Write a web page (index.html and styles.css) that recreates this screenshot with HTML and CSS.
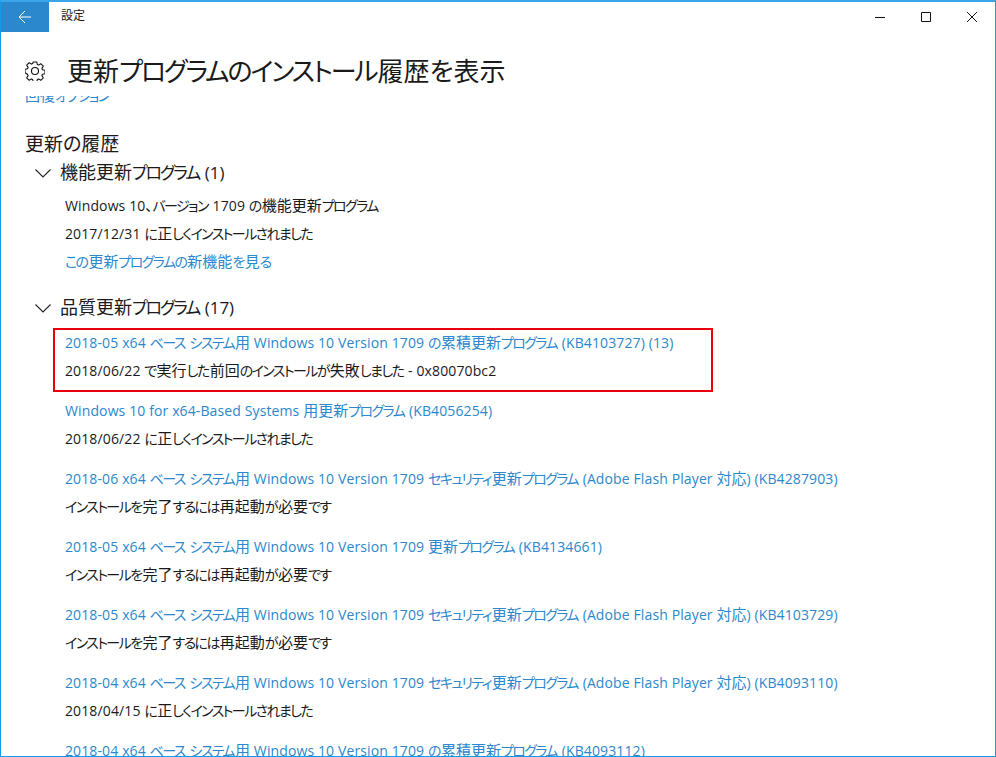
FILE: index.html
```html
<!DOCTYPE html>
<html lang="ja">
<head>
<meta charset="utf-8">
<title>設定</title>
<link rel="stylesheet" href="styles.css">
</head>
<body>
<div class="window">
  <header class="titlebar">
    <div class="back">
      <svg width="16" height="16" viewBox="0 0 16 16"><path d="M14 8H2M8 2 2 8l6 6" fill="none" stroke="#fff" stroke-width="1"/></svg>
    </div>
    <div class="apptitle">設定</div>
    <div class="controls">
      <div class="ctl"><svg width="10" height="10" viewBox="0 0 10 10"><path d="M0 5.5h10" stroke="#111" stroke-width="1"/></svg></div>
      <div class="ctl"><svg width="10" height="10" viewBox="0 0 10 10"><path d="M.5.5h9v9h-9z" fill="none" stroke="#111" stroke-width="1"/></svg></div>
      <div class="ctl"><svg width="10" height="10" viewBox="0 0 10 10"><path d="M0 0l10 10M10 0 0 10" fill="none" stroke="#111" stroke-width="1"/></svg></div>
    </div>
  </header>
  <div class="pagehead">
    <svg class="gear" width="20" height="20" viewBox="0 0 20 20"><path d="M8.2 1h3.6l.5 2.5 1.3.6 2.2-1.4 2.5 2.5-1.4 2.2.6 1.3 2.5.5v3.6l-2.5.5-.6 1.3 1.4 2.2-2.5 2.5-2.2-1.4-1.3.6-.5 2.5H8.2l-.5-2.5-1.3-.6-2.2 1.4-2.5-2.5 1.4-2.2-.6-1.3L0 11.8V8.2l2.5-.5.6-1.3-1.4-2.2 2.5-2.5 2.2 1.4 1.3-.6z" fill="none" stroke="#111" stroke-width="1.1" stroke-linejoin="round"/><circle cx="10" cy="10" r="3.5" fill="none" stroke="#111" stroke-width="1.1"/></svg>
    <h1 class="pagetitle">更新<span class="k">プログラムのインストール</span>履歴を表示</h1>
  </div>
  <main class="scroll">
    <div class="content">
      <a class="link toplink"><span class="h">回復</span><span class="k">オプション</span></a>
      <h2 class="history">更新の履歴</h2>
      <section class="group">
        <h3 class="grouphead"><svg class="chev" width="16" height="9" viewBox="0 0 16 9"><path d="M.5.5 8 8 15.5.5" fill="none" stroke="#222" stroke-width="1.1"/></svg><span><span class="h">機能更新</span><span class="k">プログラム</span> (1)</span></h3>
        <div class="item first">
          <p class="line">Windows 10、<span class="k">バージョン</span> 1709 <span class="k">の</span><span class="h">機能更新</span><span class="k">プログラム</span></p>
          <p class="line">2017/12/31 <span class="k">に</span><span class="h">正</span><span class="k">しくインストールされました</span></p>
          <p class="line link"><span class="k">この</span><span class="h">更新</span><span class="k">プログラムの</span><span class="h">新機能</span><span class="k">を</span><span class="h">見</span><span class="k">る</span></p>
        </div>
      </section>
      <section class="group second">
        <h3 class="grouphead"><svg class="chev" width="16" height="9" viewBox="0 0 16 9"><path d="M.5.5 8 8 15.5.5" fill="none" stroke="#222" stroke-width="1.1"/></svg><span><span class="h">品質更新</span><span class="k">プログラム</span> (17)</span></h3>
        <div class="item flagged">
          <p class="line link">2018-05 x64 <span class="k">ベース</span> <span class="k">システム</span><span class="h">用</span> Windows 10 Version 1709 <span class="k">の</span><span class="h">累積更新</span><span class="k">プログラム</span> (KB4103727) (13)</p>
          <p class="line">2018/06/22 <span class="k">で</span><span class="h">実行</span><span class="k">した</span><span class="h">前回</span><span class="k">のインストールが</span><span class="h">失敗</span><span class="k">しました</span> - 0x80070bc2</p>
        </div>
        <div class="item">
          <p class="line link">Windows 10 for x64-Based Systems <span class="h">用更新</span><span class="k">プログラム</span> (KB4056254)</p>
          <p class="line">2018/06/22 <span class="k">に</span><span class="h">正</span><span class="k">しくインストールされました</span></p>
        </div>
        <div class="item">
          <p class="line link">2018-06 x64 <span class="k">ベース</span> <span class="k">システム</span><span class="h">用</span> Windows 10 Version 1709 <span class="k">セキュリティ</span><span class="h">更新</span><span class="k">プログラム</span> (Adobe Flash Player <span class="h">対応</span>) (KB4287903)</p>
          <p class="line"><span class="k">インストールを</span><span class="h">完了</span><span class="k">するには</span><span class="h">再起動</span><span class="k">が</span><span class="h">必要</span><span class="k">です</span></p>
        </div>
        <div class="item">
          <p class="line link">2018-05 x64 <span class="k">ベース</span> <span class="k">システム</span><span class="h">用</span> Windows 10 Version 1709 <span class="h">更新</span><span class="k">プログラム</span> (KB4134661)</p>
          <p class="line"><span class="k">インストールを</span><span class="h">完了</span><span class="k">するには</span><span class="h">再起動</span><span class="k">が</span><span class="h">必要</span><span class="k">です</span></p>
        </div>
        <div class="item">
          <p class="line link">2018-05 x64 <span class="k">ベース</span> <span class="k">システム</span><span class="h">用</span> Windows 10 Version 1709 <span class="k">セキュリティ</span><span class="h">更新</span><span class="k">プログラム</span> (Adobe Flash Player <span class="h">対応</span>) (KB4103729)</p>
          <p class="line"><span class="k">インストールを</span><span class="h">完了</span><span class="k">するには</span><span class="h">再起動</span><span class="k">が</span><span class="h">必要</span><span class="k">です</span></p>
        </div>
        <div class="item">
          <p class="line link">2018-04 x64 <span class="k">ベース</span> <span class="k">システム</span><span class="h">用</span> Windows 10 Version 1709 <span class="k">セキュリティ</span><span class="h">更新</span><span class="k">プログラム</span> (Adobe Flash Player <span class="h">対応</span>) (KB4093110)</p>
          <p class="line">2018/04/15 <span class="k">に</span><span class="h">正</span><span class="k">しくインストールされました</span></p>
        </div>
        <div class="item">
          <p class="line link">2018-04 x64 <span class="k">ベース</span> <span class="k">システム</span><span class="h">用</span> Windows 10 Version 1709 <span class="k">の</span><span class="h">累積更新</span><span class="k">プログラム</span> (KB4093112)</p>
        </div>
      </section>
    </div>
  </main>
</div>
</body>
</html>
```
FILE: styles.css
```css
* { box-sizing: border-box; }
html, body { margin: 0; padding: 0; background: #fff; }
body {
  font-family: "Open Sans", "Noto Sans CJK JP", sans-serif;
  font-feature-settings: "palt";
  color: #1a1a1a;
  font-size: 14px;
  letter-spacing: 0.12px;
}
.k { letter-spacing: -1.6px; padding-right: 1px; line-height: 1; }
.h { font-size: 15px; letter-spacing: 0; line-height: 1; }
.window {
  width: 996px;
  height: 757px;
  border: 1px solid #0f9bf0;
  border-top: 2px solid #3aa6ea;
  display: flex;
  flex-direction: column;
  overflow: hidden;
  background: #fff;
}
.titlebar { display: flex; align-items: center; height: 30px; flex: none; }
.back {
  width: 48px; height: 30px; background: #2b88cc;
  display: flex; align-items: center; justify-content: center;
  margin-right: 12px;
}
.apptitle { font-size: 12px; flex: 1; line-height: 28px; height: 30px; }
.controls { display: flex; }
.ctl { width: 46px; height: 30px; display: flex; align-items: center; justify-content: center; }
.pagehead { display: flex; align-items: center; height: 64px; flex: none; padding: 20px 0 6px 24px; }
.gear { flex: none; }
.pagetitle { margin: 0 0 0 22px; font-size: 26px; font-weight: 400; line-height: 38px; letter-spacing: 0; white-space: nowrap; }
.pagetitle .k { letter-spacing: -2.1px; }
.scroll { flex: 1; overflow: hidden; }
.content { margin-top: -14px; padding-left: 24px; }
.toplink { display: block; line-height: 28px; height: 28px; }
.link { color: #2b88cc; }
.history { margin: 20px 0 0; font-size: 19px; font-weight: 400; line-height: 28px; letter-spacing: 0; }
.group { margin: 0; }
.second { margin-top: 18px; }
.grouphead { margin: 1px 0 0; display: flex; align-items: center; font-size: 17px; font-weight: 400; line-height: 28px; padding-left: 10px; letter-spacing: 0; }
.grouphead .k { letter-spacing: -2.1px; }
.grouphead .h { font-size: 18px; }
.chev { margin-right: 9px; flex: none; }
.item { margin: 6px 0 12px; padding-left: 40px; }
.first { margin-top: 5px; }
.line { margin: 0; line-height: 28px; white-space: nowrap; }
.flagged { position: relative; margin-top: 7px; }
.flagged::before {
  content: ""; box-sizing: border-box; position: absolute; left: 28px; top: -1px; width: 660px; height: 64px;
  border: 2px solid #e8000d; pointer-events: none;
}
```
